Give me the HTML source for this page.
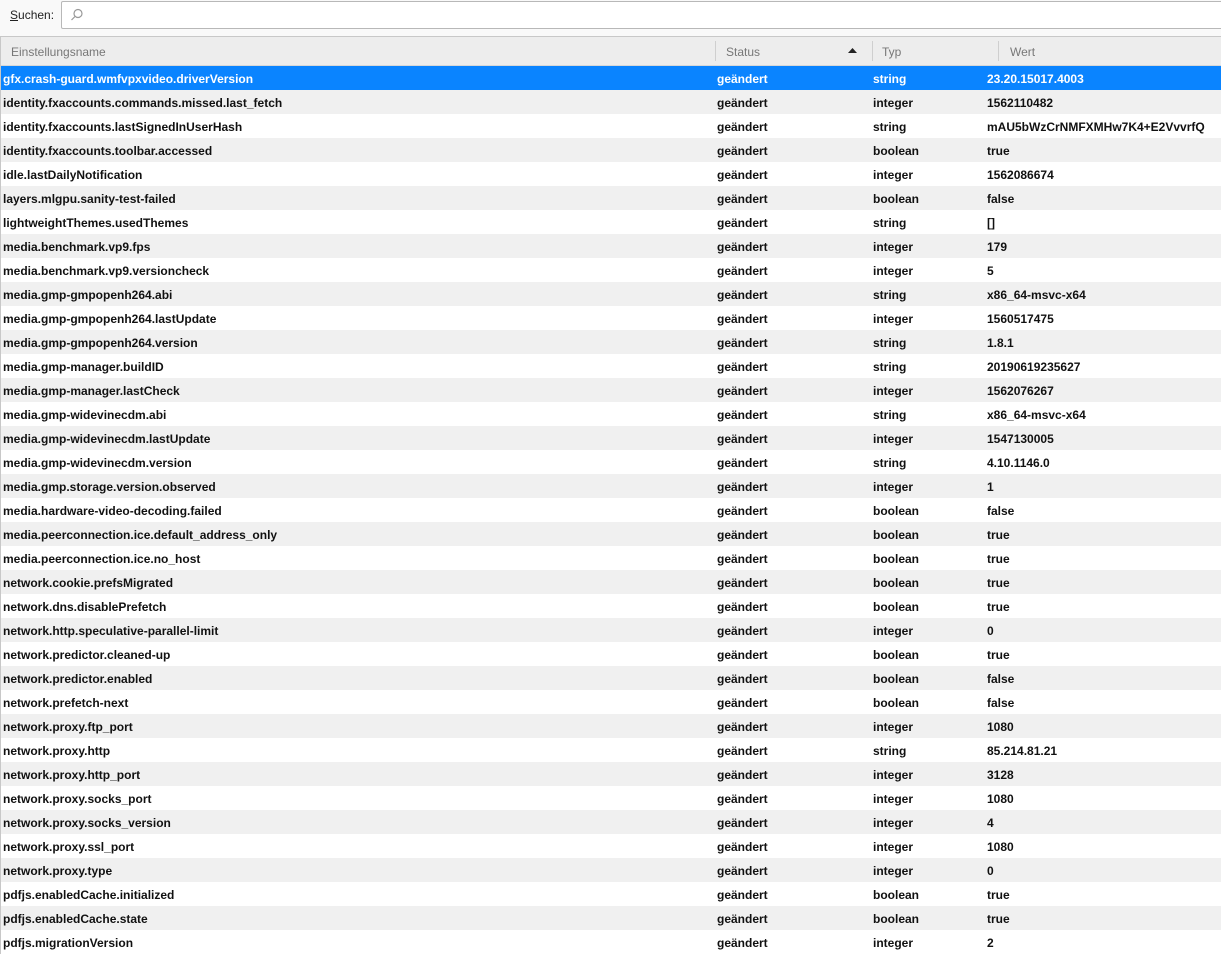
<!DOCTYPE html>
<html><head><meta charset="utf-8"><style>
*{margin:0;padding:0;box-sizing:border-box}
body{width:1221px;height:954px;overflow:hidden;background:#f9f9f9;font-family:"Liberation Sans",sans-serif;position:relative}
.lbl{position:absolute;left:10px;top:8px;font-size:12px;color:#222}
.inp{position:absolute;left:61px;top:1px;width:1170px;height:28px;border:1px solid #b8b8b8;background:#fff;border-radius:2px}
.tbl{position:absolute;left:0;top:36px;width:1221px;height:918px;border-left:1px solid #c8c8c8;border-top:1px solid #c8c8c8;background:#fff;overflow:hidden}
.hdr{height:29px;background:#ededed;border-bottom:1px solid #d8d8d8;position:relative;font-size:12px;color:#777}
.hdr span{position:absolute;top:8px}
.sep{position:absolute;top:4px;width:1px;height:20px;background:#cfcfcf}
.row{height:24px;position:relative;font-size:12px;font-weight:bold;color:#111;white-space:nowrap}
.row:nth-child(even){background:#f0f0f0}
.row.sel{background:#0a84ff;color:#fff}
.row span{position:absolute;top:6px}
.c1{left:2px}.c2{left:716px}.c3{left:872px}.c4{left:986px}
</style></head><body>
<div class="lbl"><u>S</u>uchen:</div>
<div class="inp"><svg style="position:absolute;left:8px;top:6px" width="14" height="14" viewBox="0 0 14 14"><circle cx="8" cy="5.5" r="4" fill="none" stroke="#999" stroke-width="1.2"/><path d="M5 8.5L1.5 12" stroke="#999" stroke-width="1.2"/></svg></div>
<div class="tbl">
<div class="hdr"><span style="left:10px">Einstellungsname</span><div class="sep" style="left:714px"></div><span style="left:725px">Status</span><svg style="position:absolute;left:847px;top:11px" width="9" height="5"><path d="M0 5L4.5 0L9 5Z" fill="#222"/></svg><div class="sep" style="left:871px"></div><span style="left:881px">Typ</span><div class="sep" style="left:997px"></div><span style="left:1009px">Wert</span></div>
<div>
<div class="row sel"><span class="c1">gfx.crash-guard.wmfvpxvideo.driverVersion</span><span class="c2">geändert</span><span class="c3">string</span><span class="c4">23.20.15017.4003</span></div>
<div class="row"><span class="c1">identity.fxaccounts.commands.missed.last_fetch</span><span class="c2">geändert</span><span class="c3">integer</span><span class="c4">1562110482</span></div>
<div class="row"><span class="c1">identity.fxaccounts.lastSignedInUserHash</span><span class="c2">geändert</span><span class="c3">string</span><span class="c4">mAU5bWzCrNMFXMHw7K4+E2VvvrfQ</span></div>
<div class="row"><span class="c1">identity.fxaccounts.toolbar.accessed</span><span class="c2">geändert</span><span class="c3">boolean</span><span class="c4">true</span></div>
<div class="row"><span class="c1">idle.lastDailyNotification</span><span class="c2">geändert</span><span class="c3">integer</span><span class="c4">1562086674</span></div>
<div class="row"><span class="c1">layers.mlgpu.sanity-test-failed</span><span class="c2">geändert</span><span class="c3">boolean</span><span class="c4">false</span></div>
<div class="row"><span class="c1">lightweightThemes.usedThemes</span><span class="c2">geändert</span><span class="c3">string</span><span class="c4">[]</span></div>
<div class="row"><span class="c1">media.benchmark.vp9.fps</span><span class="c2">geändert</span><span class="c3">integer</span><span class="c4">179</span></div>
<div class="row"><span class="c1">media.benchmark.vp9.versioncheck</span><span class="c2">geändert</span><span class="c3">integer</span><span class="c4">5</span></div>
<div class="row"><span class="c1">media.gmp-gmpopenh264.abi</span><span class="c2">geändert</span><span class="c3">string</span><span class="c4">x86_64-msvc-x64</span></div>
<div class="row"><span class="c1">media.gmp-gmpopenh264.lastUpdate</span><span class="c2">geändert</span><span class="c3">integer</span><span class="c4">1560517475</span></div>
<div class="row"><span class="c1">media.gmp-gmpopenh264.version</span><span class="c2">geändert</span><span class="c3">string</span><span class="c4">1.8.1</span></div>
<div class="row"><span class="c1">media.gmp-manager.buildID</span><span class="c2">geändert</span><span class="c3">string</span><span class="c4">20190619235627</span></div>
<div class="row"><span class="c1">media.gmp-manager.lastCheck</span><span class="c2">geändert</span><span class="c3">integer</span><span class="c4">1562076267</span></div>
<div class="row"><span class="c1">media.gmp-widevinecdm.abi</span><span class="c2">geändert</span><span class="c3">string</span><span class="c4">x86_64-msvc-x64</span></div>
<div class="row"><span class="c1">media.gmp-widevinecdm.lastUpdate</span><span class="c2">geändert</span><span class="c3">integer</span><span class="c4">1547130005</span></div>
<div class="row"><span class="c1">media.gmp-widevinecdm.version</span><span class="c2">geändert</span><span class="c3">string</span><span class="c4">4.10.1146.0</span></div>
<div class="row"><span class="c1">media.gmp.storage.version.observed</span><span class="c2">geändert</span><span class="c3">integer</span><span class="c4">1</span></div>
<div class="row"><span class="c1">media.hardware-video-decoding.failed</span><span class="c2">geändert</span><span class="c3">boolean</span><span class="c4">false</span></div>
<div class="row"><span class="c1">media.peerconnection.ice.default_address_only</span><span class="c2">geändert</span><span class="c3">boolean</span><span class="c4">true</span></div>
<div class="row"><span class="c1">media.peerconnection.ice.no_host</span><span class="c2">geändert</span><span class="c3">boolean</span><span class="c4">true</span></div>
<div class="row"><span class="c1">network.cookie.prefsMigrated</span><span class="c2">geändert</span><span class="c3">boolean</span><span class="c4">true</span></div>
<div class="row"><span class="c1">network.dns.disablePrefetch</span><span class="c2">geändert</span><span class="c3">boolean</span><span class="c4">true</span></div>
<div class="row"><span class="c1">network.http.speculative-parallel-limit</span><span class="c2">geändert</span><span class="c3">integer</span><span class="c4">0</span></div>
<div class="row"><span class="c1">network.predictor.cleaned-up</span><span class="c2">geändert</span><span class="c3">boolean</span><span class="c4">true</span></div>
<div class="row"><span class="c1">network.predictor.enabled</span><span class="c2">geändert</span><span class="c3">boolean</span><span class="c4">false</span></div>
<div class="row"><span class="c1">network.prefetch-next</span><span class="c2">geändert</span><span class="c3">boolean</span><span class="c4">false</span></div>
<div class="row"><span class="c1">network.proxy.ftp_port</span><span class="c2">geändert</span><span class="c3">integer</span><span class="c4">1080</span></div>
<div class="row"><span class="c1">network.proxy.http</span><span class="c2">geändert</span><span class="c3">string</span><span class="c4">85.214.81.21</span></div>
<div class="row"><span class="c1">network.proxy.http_port</span><span class="c2">geändert</span><span class="c3">integer</span><span class="c4">3128</span></div>
<div class="row"><span class="c1">network.proxy.socks_port</span><span class="c2">geändert</span><span class="c3">integer</span><span class="c4">1080</span></div>
<div class="row"><span class="c1">network.proxy.socks_version</span><span class="c2">geändert</span><span class="c3">integer</span><span class="c4">4</span></div>
<div class="row"><span class="c1">network.proxy.ssl_port</span><span class="c2">geändert</span><span class="c3">integer</span><span class="c4">1080</span></div>
<div class="row"><span class="c1">network.proxy.type</span><span class="c2">geändert</span><span class="c3">integer</span><span class="c4">0</span></div>
<div class="row"><span class="c1">pdfjs.enabledCache.initialized</span><span class="c2">geändert</span><span class="c3">boolean</span><span class="c4">true</span></div>
<div class="row"><span class="c1">pdfjs.enabledCache.state</span><span class="c2">geändert</span><span class="c3">boolean</span><span class="c4">true</span></div>
<div class="row"><span class="c1">pdfjs.migrationVersion</span><span class="c2">geändert</span><span class="c3">integer</span><span class="c4">2</span></div>
</div></div>
</body></html>
